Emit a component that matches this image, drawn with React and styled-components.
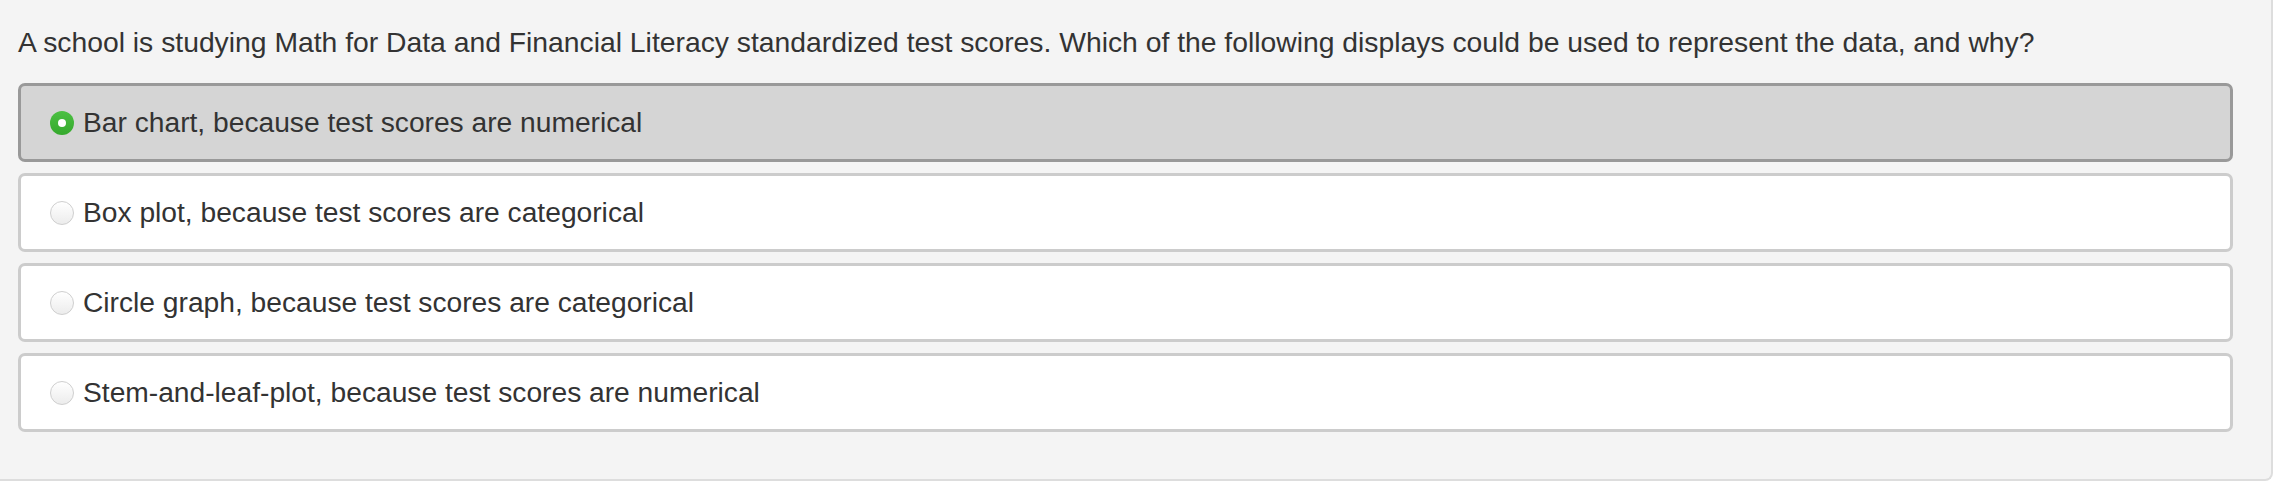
import React from 'react'
import styled, { createGlobalStyle } from 'styled-components'

const GlobalStyle = createGlobalStyle`
    body {
        margin: 0;
        background: #fff;
        font-family: "Liberation Sans", Arial, Helvetica, sans-serif;
        color: #333;
    }
`

const Panel = styled.section`
    margin-right: 9px;
    padding: 22px 38px 47px 18px;
    background: #f4f4f4;
    border-right: 2px solid #ddd;
    border-bottom: 2px solid #ddd;
    border-bottom-right-radius: 8px;
`

const Question = styled.p`
    margin: 0 0 21px;
    font-size: 28.3px;
    line-height: 40px;
`

const Options = styled.div`
    display: flex;
    flex-direction: column;
    gap: 11px;
`

const Option = styled.label`
    display: flex;
    align-items: center;
    gap: 9px;
    box-sizing: border-box;
    height: 79px;
    padding-left: 29px;
    border: 3px solid ${p => (p.$selected ? '#999' : '#ccc')};
    border-radius: 7px;
    background: ${p => (p.$selected ? '#d5d5d5' : '#fff')};
    font-size: 28.2px;
    cursor: pointer;
`

const Radio = styled.span`
    position: relative;
    flex: none;
    box-sizing: border-box;
    width: 24px;
    height: 24px;
    border-radius: 50%;
    border: ${p => (p.$checked ? 'none' : '1.5px solid #cfcfcf')};
    background: ${p =>
        p.$checked
            ? 'linear-gradient(#4cc043, #35a92d)'
            : 'linear-gradient(#fff, #ececec)'};

    &::after {
        content: '';
        display: ${p => (p.$checked ? 'block' : 'none')};
        position: absolute;
        left: 50%;
        top: 50%;
        width: 8px;
        height: 8px;
        margin: -4px 0 0 -4px;
        border-radius: 50%;
        background: #fff;
    }
`

const choices = [
    'Bar chart, because test scores are numerical',
    'Box plot, because test scores are categorical',
    'Circle graph, because test scores are categorical',
    'Stem-and-leaf-plot, because test scores are numerical',
]

const App = () => {
    const [picked, setPicked] = React.useState(0)
    return (
        <>
            <GlobalStyle />
            <Panel>
                <Question>
                    A school is studying Math for Data and Financial Literacy standardized test scores. Which of the following displays could be used to represent the data, and why?
                </Question>
                <Options>
                    {choices.map((text, i) => (
                        <Option key={i} $selected={picked === i} onClick={() => setPicked(i)}>
                            <Radio $checked={picked === i} />
                            {text}
                        </Option>
                    ))}
                </Options>
            </Panel>
        </>
    )
}

export default App
